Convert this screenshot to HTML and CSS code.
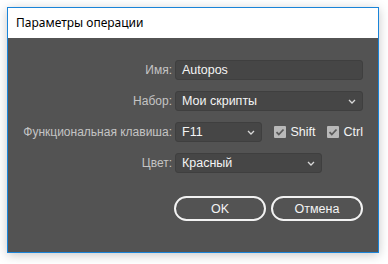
FILE: index.html
```html
<!DOCTYPE html>
<html lang="ru">
<head>
<meta charset="utf-8">
<link rel="stylesheet" href="styles.css">
</head>
<body>
<div class="window">
  <div class="titlebar">Параметры операции</div>
  <div class="content">
    <div class="form">
      <label class="label">Имя:</label>
      <div class="field input">Autopos</div>

      <label class="label">Набор:</label>
      <div class="field select">Мои скрипты<svg class="chev" viewBox="0 0 8 5"><path d="M1 1l3 3 3-3"/></svg></div>

      <label class="label">Функциональная клавиша:</label>
      <div class="row">
        <div class="field select w-key">F11<svg class="chev" viewBox="0 0 8 5"><path d="M1 1l3 3 3-3"/></svg></div>
        <span class="check"><span class="box"><svg viewBox="0 0 12 12"><path d="M2.5 6.2l2.3 2.3 4.7-5"/></svg></span>Shift</span>
        <span class="check"><span class="box"><svg viewBox="0 0 12 12"><path d="M2.5 6.2l2.3 2.3 4.7-5"/></svg></span>Ctrl</span>
      </div>

      <label class="label">Цвет:</label>
      <div class="row">
        <div class="field select w-color">Красный<svg class="chev" viewBox="0 0 8 5"><path d="M1 1l3 3 3-3"/></svg></div>
      </div>
    </div>
    <div class="buttons">
      <button class="btn">OK</button>
      <button class="btn">Отмена</button>
    </div>
  </div>
</div>
</body>
</html>
```
FILE: styles.css
```css
html, body {
  margin: 0;
  padding: 0;
  background: #ffffff;
}
body {
  padding: 7px 9px 11px 7px;
  font-family: "Liberation Sans", Arial, sans-serif;
}
.window {
  width: 370px;
  height: 244px;
  border: 1px solid #1a84d8;
  background: #535353;
  box-shadow: 0 2px 10px rgba(0,0,0,0.22);
  display: flex;
  flex-direction: column;
}
.titlebar {
  height: 30px;
  background: #ffffff;
  color: #000000;
  font-family: "Noto Sans", "Open Sans", sans-serif;
  font-size: 12px;
  line-height: 30px;
  padding-left: 8px;
}
.content {
  padding: 22px 15px 0 0;
  display: flex;
  flex-direction: column;
}
.form {
  display: grid;
  grid-template-columns: 164px 188px;
  column-gap: 3px;
  row-gap: 11px;
  align-items: center;
}
.label {
  text-align: right;
  color: #c4c4c4;
  font-size: 12px;
}
.field {
  height: 20px;
  box-sizing: border-box;
  border: 1px solid #3f3f3f;
  border-radius: 3px;
  background: #464646;
  color: #f4f4f4;
  font-size: 12.5px;
  line-height: 18px;
  padding-left: 6px;
  position: relative;
}
.select {
  font-weight: normal;
}
.chev {
  position: absolute;
  right: 6px;
  top: 7px;
  width: 8px;
  height: 5px;
  fill: none;
  stroke: #d8d8d8;
  stroke-width: 1.3;
}
.row {
  display: flex;
  align-items: center;
}
.w-key { width: 88px; }
.w-color { width: 147px; }
.check {
  display: flex;
  align-items: center;
  color: #f4f4f4;
  font-size: 12.5px;
  margin-left: 12px;
}
.check + .check { margin-left: 11px; }
.box {
  width: 12px;
  height: 12px;
  background: #b9b9b9;
  border-radius: 1px;
  margin-right: 5px;
  display: flex;
}
.box svg {
  width: 12px;
  height: 12px;
  fill: none;
  stroke: #5a5a5a;
  stroke-width: 1.8;
}
.buttons {
  display: flex;
  justify-content: flex-end;
  gap: 5px;
  margin-top: 23px;
}
.btn {
  width: 92px;
  height: 25px;
  border: 2px solid #f2f2f2;
  border-radius: 13px;
  background: transparent;
  color: #f4f4f4;
  font-family: "Liberation Sans", Arial, sans-serif;
  font-size: 12.5px;
  padding: 0;
}
```
